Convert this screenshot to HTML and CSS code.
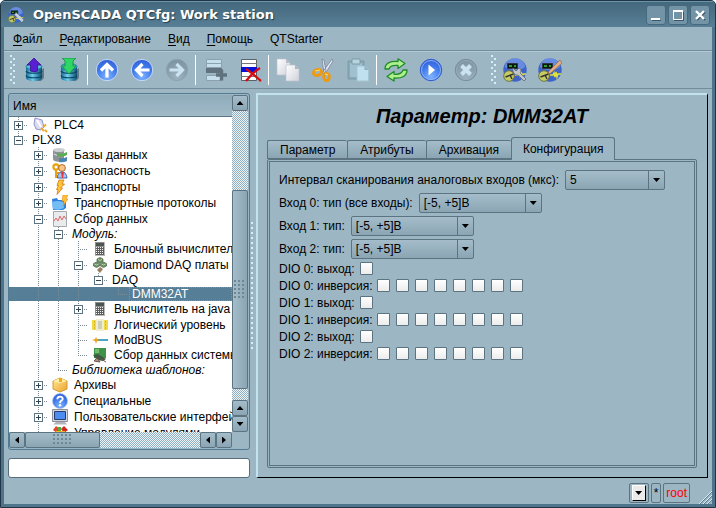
FILE: index.html
```html
<!DOCTYPE html>
<html lang="ru">
<head>
<meta charset="utf-8">
<title>OpenSCADA QTCfg: Work station</title>
<link rel="stylesheet" href="styles.css">
</head>
<body>
<svg class="defs" aria-hidden="true">
  <defs>
    <radialGradient id="gBlue" cx=".5" cy=".8" r=".8"><stop offset="0" stop-color="#7fb4ff"/><stop offset=".6" stop-color="#3f78ea"/><stop offset="1" stop-color="#3560d8"/></radialGradient>
    <radialGradient id="gGray" cx=".5" cy=".8" r=".8"><stop offset="0" stop-color="#9db3bf"/><stop offset="1" stop-color="#7b929f"/></radialGradient>
    <linearGradient id="gDb"><stop offset="0" stop-color="#176a92"/><stop offset=".4" stop-color="#6fd0ee"/><stop offset="1" stop-color="#0e4d70"/></linearGradient>
    <linearGradient id="gPage" x2="1" y2="1"><stop offset="0" stop-color="#fff"/><stop offset="1" stop-color="#cfd2dc"/></linearGradient>
    <linearGradient id="gGold" x2="1" y2="1"><stop offset="0" stop-color="#ffe89a"/><stop offset="1" stop-color="#eda32a"/></linearGradient>
    <symbol id="db" viewBox="0 0 24 24">
      <path d="M8 20l14-10v10l-3 3H8z" fill="#1d3440" opacity=".45"/>
      <path d="M4 8v12c0 4 16 4 16 0V8z" fill="url(#gDb)"/>
      <path d="M4 13c1 3 15 3 16 0M4 17.500c1 3 15 3 16 0" fill="none" stroke="#0b4867" stroke-width="1.200"/>
      <ellipse cx="12" cy="8.500" rx="8" ry="3" fill="#58bfe0" stroke="#1d7ca4"/>
    </symbol>
    <symbol id="scada" viewBox="0 0 24 24">
      <circle cx="12" cy="12" r="11.700" fill="#3d64c8"/><path d="M2 9a10 9 0 0 1 20 0c-4 4-15 4-20 0z" fill="#86a6ef" opacity=".6"/>
      <path d="M4.500 5.500h10v5h-10z" fill="#0b1a10" stroke="#2e3440"/><path d="M6 7h3v2H6zM11 7h2v2h-2z" fill="#2e9a35"/>
      <path d="M12 17h3l1-2 1 4 1-5 1 5 1-3h3" fill="none" stroke="#dfe13c" stroke-width="1.500"/>
      <circle cx="6" cy="18" r="5.300" fill="#c7cc62" stroke="#6e7740"/><path d="M2.500 19l8-3M7 17l2 4" stroke="#333" stroke-width="1.400"/>
    </symbol>
    <symbol id="calc" viewBox="0 0 16 16">
      <path d="M3 1h10v14H3z" fill="#8d8d8d"/><path d="M4 2h8v3H4z" fill="#4c5650"/>
      <path d="M4 6h8v8H4z" fill="#5e5e5e"/>
      <path d="M4 6.500h8M4 8.500h8M4 10.500h8M4 12.500h8" stroke="#f4f4f4" stroke-dasharray="1 1"/>
      <path d="M12.500 1v13.500H3" stroke="#bbb" fill="none"/>
    </symbol>
    <symbol id="bolt" viewBox="0 0 16 16"><path d="M7 1h5l-2 4h2.500l-4 4h2L5 15.500l1-5H4.500l2-4H5z" fill="#ffc933" stroke="#d9701c" stroke-width=".8"/></symbol>
  </defs>
</svg>
<div class="window">
  <header class="titlebar">
    <svg class="app-icon" viewBox="0 0 24 24"><use href="#scada"/><path d="M11 10l11 11" stroke="#ccd0d4" stroke-width="4"/></svg>
    <h1>OpenSCADA QTCfg: Work station</h1>
    <div class="winbtns">
      <button aria-label="Свернуть"><svg viewBox="0 0 18 18"><path d="M5 14.500h9" stroke="#3a5668"/><path d="M4 13h9" stroke="#fff" stroke-width="2"/></svg></button>
      <button aria-label="Развернуть"><svg viewBox="0 0 18 18"><path d="M5 14.500h9.500V6" stroke="#3a5668" fill="none"/><path d="M4.500 4.500h9v9h-9z" stroke="#fff" fill="none"/><path d="M4 5h10" stroke="#fff" stroke-width="2"/></svg></button>
      <button aria-label="Закрыть"><svg viewBox="0 0 18 18"><path d="M6 6l8 8M14 6l-8 8" stroke="#3a5668" stroke-width="2"/><path d="M5 5l8 8M13 5l-8 8" stroke="#fff" stroke-width="2.400"/></svg></button>
    </div>
  </header>

  <div class="client">
    <nav class="menubar">
      <a href="#"><u>Ф</u>айл</a><a href="#"><u>Р</u>едактирование</a><a href="#"><u>В</u>ид</a><a href="#"><u>П</u>омощь</a><a href="#">QTStarter</a>
    </nav>

    <div class="toolbar">
      <span class="handle"></span>
      <button aria-label="Загрузить из БД"><svg viewBox="0 0 24 24"><use href="#db"/><path d="M12 0l7 7h-3.500v6q-3.500 2-7 0V7H5z" fill="#5a1fd0" stroke="#37108c" stroke-width=".8"/></svg></button>
      <button aria-label="Сохранить в БД"><svg viewBox="0 0 24 24"><use href="#db"/><path d="M5 0h14l-3 3v5h3l-7 8-7-8h3V3z" fill="#2fd565" stroke="#138a38" stroke-width=".8"/></svg></button>
      <span class="sep"></span>
      <button aria-label="Вверх"><svg viewBox="0 0 24 24"><circle cx="12" cy="12" r="10.700" fill="url(#gBlue)" stroke="#c6dcf6" stroke-width="1"/><path d="M12 19.500V7M6 12.500L12 6.500l6 6" fill="none" stroke="#fff" stroke-width="3.200"/></svg></button>
      <button aria-label="Назад"><svg viewBox="0 0 24 24"><circle cx="12" cy="12" r="10.700" fill="url(#gBlue)" stroke="#c6dcf6" stroke-width="1"/><path d="M19.500 12H7M12.500 6L6.500 12l6 6" fill="none" stroke="#fff" stroke-width="3.200"/></svg></button>
      <button aria-label="Вперёд" disabled><svg viewBox="0 0 24 24"><circle cx="12" cy="12" r="10.700" fill="url(#gGray)" stroke="#8ea4b0"/><path d="M4.500 12H17M11.500 6l6 6-6 6" fill="none" stroke="#c9e4f0" stroke-width="3.200"/></svg></button>
      <span class="sep"></span>
      <button aria-label="Добавить" disabled><svg viewBox="0 0 24 24"><path d="M3.500 1.500h15v4h-15zM3.500 5.500h15v4h-15zM3.500 17.500h15v5h-15z" fill="#c5e0ec" stroke="#8ba1ad"/><path d="M3 10h16v5H3z" fill="#60727d"/><path d="M13 17h11M18.500 11.500v11" stroke="#60727d" stroke-width="3.400"/></svg></button>
      <button aria-label="Удалить"><svg viewBox="0 0 24 24"><path d="M3.500 1.500h15v21h-15z" fill="#fff" stroke="#59636a"/><path d="M3 5.500h16M3 18.500h16" stroke="#777"/><path d="M3 9h16v5H3z" fill="#0510d8"/><path d="M8 11c5 3 9 7 15 12M22 10C17 13 12 18 8 23" stroke="#d60b10" stroke-width="2.300" fill="none"/></svg></button>
      <span class="sep"></span>
      <button aria-label="Копировать"><svg viewBox="0 0 24 24"><path d="M1 1h9l4 4v12H1z" fill="url(#gPage)" stroke="#c0c3cd" stroke-width=".7"/><path d="M10 1v4h4" fill="#b8bac4"/><path d="M10 7h9l4 4v12H10z" fill="url(#gPage)" stroke="#c0c3cd" stroke-width=".7"/><path d="M19 7v4h4" fill="#b2b4c0"/></svg></button>
      <button aria-label="Вырезать"><svg viewBox="0 0 24 24"><path d="M11 1l2 1 2 11-2 2zM21 1l1 2-8 13-3-1z" fill="#e4e8f0" stroke="#77829a" stroke-width=".8"/><g fill="none" stroke="#ef9a0c" stroke-width="3"><ellipse cx="6.500" cy="14.500" rx="4" ry="2.800" transform="rotate(-15 6.500 14.500)"/><ellipse cx="15.500" cy="19" rx="2.800" ry="3.500"/></g><path d="M4 13l5-1M14 16l3 1" stroke="#ffe27a"/></svg></button>
      <button aria-label="Вставить" disabled><svg viewBox="0 0 24 24"><path d="M2 3h16v18H2z" fill="#89a9b8" stroke="#7e9aa8"/><path d="M4 5h12v14H4z" fill="#9fc0ce"/><path d="M6 1h8v5H6z" fill="#b6d4e0" stroke="#7e9aa8"/><path d="M11 8h7.500l4 4v11H11z" fill="#bfe0ec" stroke="#a4c5d3"/><path d="M18.500 8v4h4" fill="#8cb2c2"/></svg></button>
      <span class="sep"></span>
      <button aria-label="Обновить"><svg viewBox="0 0 24 24"><g fill="#aef08e" stroke="#1f8c26" stroke-width="1.300" stroke-linejoin="round"><path d="M1 11c0-6 5-8 13-7.500V.8L21 5.500l-7 5V7.500c-5-.5-8 0-9 3.500z"/><path d="M23 12c0 6-5 8.500-13 8v3L3 18.500l7-5v2.700c5 .5 8-.7 9-4.200z"/></g></svg></button>
      <button aria-label="Запустить"><svg viewBox="0 0 24 24"><circle cx="12" cy="12" r="10.700" fill="url(#gBlue)" stroke="#2e5bd0"/><circle cx="12" cy="12" r="9.500" fill="none" stroke="#9cc0fa" stroke-width=".8"/><path d="M9.500 6.500l6.500 5.500-6.500 5.500z" fill="#fff"/></svg></button>
      <button aria-label="Остановить" disabled><svg viewBox="0 0 24 24"><circle cx="12" cy="12" r="10.700" fill="url(#gGray)" stroke="#788e9a"/><circle cx="12" cy="12" r="9.500" fill="none" stroke="#9ab0bc" stroke-width=".8"/><path d="M7.500 7.500l9 9M16.500 7.500l-9 9" stroke="#c9e4f0" stroke-width="4"/></svg></button>
      <span class="handle second"></span>
      <button aria-label="Конфигуратор"><svg viewBox="0 0 24 24"><use href="#scada"/><path d="M10 10l3 3 3-3c3 1 2 4 1 5l6 6-2 2-6-6c-3 1-6-3-5-7z" fill="#c0c4ca" stroke="#62676e" stroke-width=".8"/></svg></button>
      <button aria-label="Среда исполнения"><svg viewBox="0 0 24 24"><use href="#scada"/><path d="M11 13L22 2l2 3-11 10-3 1z" fill="#e2ae84" stroke="#8a6040" stroke-width=".6"/></svg></button>
    </div>

    <main class="work">
      <section class="left">
        <div class="treebox">
          <div class="viewport">
            <div class="head">Имя</div>
            <ul class="tree">
              <li><i class="v t"><button aria-label="Развернуть PLC4"></button></i><svg viewBox="0 0 16 16"><path d="M3 1l7 2 2 7-3 3-5-1-2-5z" fill="#d9dbf4" stroke="#9497c8"/><path d="M5 3l4 7" stroke="#fff" stroke-width="2"/><path d="M9 11l3 3M11 10l3-2.500M13 13l2 2" stroke="#f5a623" stroke-width="2"/></svg><span>PLC4</span></li>
              <li class="s"><i class="l t"><button aria-label="Свернуть PLX8"></button></i><span>PLX8</span></li>
              <li><i></i><i class="v t"><button aria-label="Развернуть"></button></i><svg viewBox="0 0 16 16"><path d="M1 3v9c0 3 9 4 11 1V3z" fill="#8d9497"/><ellipse cx="7" cy="3" rx="6" ry="2" fill="#c9cfd2"/><path d="M2 7c3 2 7 2 10 0" stroke="#eee" fill="none"/><path d="M5 6q5 2 10-1v3q-5 3-10 1z" fill="#5bad50"/><path d="M7 11q4 1 8-1v4q-4 2-8 1z" fill="#4a84b0"/></svg><span>Базы данных</span></li>
              <li><i></i><i class="v t"><button aria-label="Развернуть"></button></i><svg viewBox="0 0 16 16"><circle cx="4" cy="4" r="2.600" fill="none" stroke="#e8a20e" stroke-width="2.200"/><path d="M4 6v9M4 10h3M4 13h3" stroke="#e8a20e" stroke-width="2"/><circle cx="10" cy="5" r="3.400" fill="#f7c58c" stroke="#b26c2a"/><path d="M5.500 15q0-6 4.500-6t5 6z" fill="#a9c4f2" stroke="#3e68b8"/><path d="M9 9h3l-1 6h-1z" fill="#e33"/></svg><span>Безопасность</span></li>
              <li><i></i><i class="v t"><button aria-label="Развернуть"></button></i><svg><use href="#bolt"/></svg><span>Транспорты</span></li>
              <li><i></i><i class="v t"><button aria-label="Развернуть"></button></i><svg viewBox="0 0 16 16"><path d="M0 4l5-1 1 2h8v8l-3 2H1z" fill="#2f7fdd"/><path d="M0 7q6-2 11 0l1 6q-5 3-11 1z" fill="#72bdf6"/><path d="M11 0h5l-2 4h2l-5 7 1-5h-2z" fill="#ffc233" stroke="#e28a1c" stroke-width=".6"/></svg><span>Транспортные протоколы</span></li>
              <li><i></i><i class="v t"><button aria-label="Свернуть"></button></i><svg viewBox="0 0 16 16"><path d="M1.500.5h13v15h-13z" fill="#e9ebed" stroke="#a5a9ad"/><path d="M2 10l2-3 2 3 2-5 2 4 2-4 2 3" fill="none" stroke="#de6a6a"/></svg><span>Сбор данных</span></li>
              <li class="s"><i></i><i class="v"></i><i class="v t"><button aria-label="Свернуть"></button></i><span><em>Модуль:</em></span></li>
              <li><i></i><i class="v"></i><i class="v"></i><i class="v t"></i><svg><use href="#calc"/></svg><span>Блочный вычислитель</span></li>
              <li><i></i><i class="v"></i><i class="v"></i><i class="v t"><button aria-label="Свернуть"></button></i><svg viewBox="0 0 16 16"><g fill="#6f9064" stroke="#4b6646" stroke-width=".7"><path d="M8 .5l3 1.500v2.500L8 6 5 4.500V2zM4.500 5l3 1.500V9l-3 1.500L1.500 9V6.500zM11.500 5l3 1.500V9l-3 1.500L8.500 9V6.500z"/></g><path d="M8 10l3 2-3 4-3-3z" fill="#997e60"/><path d="M6 2.500l2 1 2-1M2.500 7l2 1 2-1M9.500 7l2 1 2-1" fill="none" stroke="#b9cfae"/></svg><span>Diamond DAQ платы сбора данных</span></li>
              <li class="s"><i></i><i class="v"></i><i class="v"></i><i class="v"></i><i class="l t"><button aria-label="Свернуть"></button></i><span>DAQ</span></li>
              <li class="s sel"><i></i><i class="v"></i><i class="v"></i><i class="v"></i><i></i><i class="l t"></i><span>DMM32AT</span></li>
              <li><i></i><i class="v"></i><i class="v"></i><i class="v t"><button aria-label="Развернуть"></button></i><svg><use href="#calc"/></svg><span>Вычислитель на java</span></li>
              <li><i></i><i class="v"></i><i class="v"></i><i class="v t"></i><svg viewBox="0 0 16 16"><path d="M0 3h16v10H0z" fill="#f1dc45"/><path d="M4 2h8v12H4z" fill="#f2ecd0"/><path d="M6 4h4v8H6z" fill="#cdd0b8"/><path d="M2.500 4v8M13.500 4v8" stroke="#d8ba20" stroke-dasharray="2 1"/></svg><span>Логический уровень</span></li>
              <li class="s"><i></i><i class="v"></i><i class="v"></i><i class="v t"></i><svg viewBox="0 0 16 16"><path d="M3 8h13" stroke="#4ba5c8" stroke-width="2"/><path d="M0 8l3-1 1-2 1 2 3 1-3 1-1 3-1-3z" fill="#f0a21a"/></svg><span>ModBUS</span></li>
              <li><i></i><i class="v"></i><i class="v"></i><i class="l t"></i><svg viewBox="0 0 16 16"><path d="M2 1h12v10H2z" fill="#3f9449"/><path d="M3 2h4v4H3z" fill="#74bd6b"/><path d="M1 8l5-1 8 5-3 2-6-1z" fill="#435b43"/><path d="M2 14l3-3 3 4zM9 12l5 3" stroke="#72564a" fill="#a99a86"/></svg><span>Сбор данных системы</span></li>
              <li class="s"><i></i><i class="v"></i><i class="l t"></i><span><em>Библиотека шаблонов:</em></span></li>
              <li><i></i><i class="v t"><button aria-label="Развернуть"></button></i><svg viewBox="0 0 16 16"><path d="M1 4l7-3 7 3v8l-7 3-7-3z" fill="url(#gGold)" stroke="#d09a30"/><path d="M1 4l7 2 7-2-7-3z" fill="#fff0a8"/><path d="M7 1v4h3V1" fill="#f0a81a"/></svg><span>Архивы</span></li>
              <li><i></i><i class="v t"><button aria-label="Развернуть"></button></i><svg viewBox="0 0 16 16"><circle cx="8" cy="8" r="7.500" fill="url(#gBlue)" stroke="#a6c2f2" stroke-width=".7"/><path d="M5.300 6.200C5.500 2.700 11 3 10.700 6c-.2 1.700-2.700 1.600-2.700 4" fill="none" stroke="#fff" stroke-width="1.900"/><circle cx="8" cy="12.300" r="1.200" fill="#fff"/></svg><span>Специальные</span></li>
              <li><i></i><i class="v t"><button aria-label="Развернуть"></button></i><svg viewBox="0 0 16 16"><path d="M.5.500h15v12H.5z" fill="#d5d8dc" stroke="#8b8e96"/><path d="M2.500 2.500h11v8h-11z" fill="#4d8cf0" stroke="#253d70"/><path d="M4 13h9l2 2.500H1z" fill="#b2b5bb"/></svg><span>Пользовательские интерфейсы</span></li>
              <li><i></i><i class="l t"></i><svg viewBox="0 0 16 16"><path d="M1 5l3-4 4 3-3 4z" fill="#e9442c"/><path d="M9 4l3-3 4 4-4 3z" fill="#d3261c"/><path d="M4 6h9v8H4z" fill="#f0b52a"/><path d="M6 2h3v4H6z" fill="#52ab3d"/></svg><span>Управление модулями</span></li>
            </ul>
          </div>
          <div class="vbar">
            <button class="up" aria-label="Вверх"></button><span class="track g80"></span><span class="thumb"></span><span class="track g11"></span><button class="up" aria-label="Вверх"></button><button class="down" aria-label="Вниз"></button>
          </div>
          <div class="hbar">
            <button class="lt" aria-label="Влево"></button><span class="thumb"></span><span class="track"></span><button class="lt" aria-label="Влево"></button><button class="rt" aria-label="Вправо"></button>
          </div>
        </div>
        <input class="search" type="text" aria-label="Поиск">
      </section>
      <div class="splitter"></div>
      <section class="right">
        <h2>Параметр: DMM32AT</h2>
        <div class="tabs" role="tablist">
          <button role="tab">Параметр</button><button role="tab">Атрибуты</button><button role="tab">Архивация</button><button role="tab" class="on" aria-selected="true">Конфигурация</button>
        </div>
        <div class="page">
          <div class="fields">
            <div class="line"><label for="f0">Интервал сканирования аналоговых входов (мкс):</label><span class="combo short"><select id="f0"><option>5</option></select></span></div>
            <div class="line"><label for="f1">Вход 0: тип (все входы):</label><span class="combo"><select id="f1"><option>[-5, +5]В</option></select></span></div>
            <div class="line"><label for="f2">Вход 1: тип:</label><span class="combo"><select id="f2"><option>[-5, +5]В</option></select></span></div>
            <div class="line"><label for="f3">Вход 2: тип:</label><span class="combo"><select id="f3"><option>[-5, +5]В</option></select></span></div>
          </div>
          <div class="checks"><label for="o0">DIO 0: выход:</label><input type="checkbox" id="o0"></div>
          <div class="checks"><label for="i0">DIO 0: инверсия:</label><input type="checkbox" id="i0"><input type="checkbox" aria-label="1"><input type="checkbox" aria-label="2"><input type="checkbox" aria-label="3"><input type="checkbox" aria-label="4"><input type="checkbox" aria-label="5"><input type="checkbox" aria-label="6"><input type="checkbox" aria-label="7"></div>
          <div class="checks"><label for="o1">DIO 1: выход:</label><input type="checkbox" id="o1"></div>
          <div class="checks"><label for="i1">DIO 1: инверсия:</label><input type="checkbox" id="i1"><input type="checkbox" aria-label="1"><input type="checkbox" aria-label="2"><input type="checkbox" aria-label="3"><input type="checkbox" aria-label="4"><input type="checkbox" aria-label="5"><input type="checkbox" aria-label="6"><input type="checkbox" aria-label="7"></div>
          <div class="checks"><label for="o2">DIO 2: выход:</label><input type="checkbox" id="o2"></div>
          <div class="checks"><label for="i2">DIO 2: инверсия:</label><input type="checkbox" id="i2"><input type="checkbox" aria-label="1"><input type="checkbox" aria-label="2"><input type="checkbox" aria-label="3"><input type="checkbox" aria-label="4"><input type="checkbox" aria-label="5"><input type="checkbox" aria-label="6"><input type="checkbox" aria-label="7"></div>
        </div>
      </section>
    </main>

    <footer class="status">
      <span class="cell"><button class="drop" aria-label="Список"></button></span>
      <span class="cell">*</span>
      <span class="cell user">root</span>
      <svg class="grip" viewBox="0 0 14 14"><path d="M1 14L14 1M5 14l9-9M9 14l5-5" stroke="#d8eef8"/><path d="M2 14L14 2M6 14l8-8M10 14l4-4" stroke="#5f7f90"/></svg>
    </footer>
  </div>
</div>
</body>
</html>
```
FILE: styles.css
```css
:root {
  --base: #9cb6c4;
  --edge: #5c7482;
  --btn: linear-gradient(#a5bdca, #8ba5b4);
}

* { box-sizing: border-box; }

body {
  margin: 0;
  background: #fff;
  font: 12px/14px "Liberation Sans", Arial, sans-serif;
  color: #000;
}

button, input, select { font: inherit; color: inherit; margin: 0; padding: 0; border: 0; background: none; }
svg { display: block; flex: none; }
.defs { position: absolute; width: 0; height: 0; }

.window {
  display: flex;
  flex-direction: column;
  min-height: 100vh;
  border: 1px solid #203545;
  border-radius: 5px 5px 0 0;
  background: #4d7489;
  overflow: hidden;
}

/* Title bar */
.titlebar {
  display: flex;
  align-items: center;
  height: 26px;
  padding: 0 5px 0 7px;
  border-top: 1px solid #6d93a8;
  background: linear-gradient(#44687d, #587f96);
}
.app-icon { width: 16px; height: 16px; margin-right: 9px; }
.titlebar h1 {
  flex: 1;
  margin: 0;
  font: bold 13px/16px "DejaVu Sans", sans-serif;
  color: #fff;
  text-shadow: 1px 1px 1px #263f4e;
}
.winbtns { display: flex; gap: 2px; }
.winbtns button {
  width: 20px;
  height: 20px;
  border: 1px solid #47697d;
  border-radius: 3px;
  background: #7394a6;
}
.winbtns svg { width: 18px; height: 18px; }

.client {
  flex: 1;
  display: flex;
  flex-direction: column;
  margin: 0 3px 3px;
  background: var(--base);
}

/* Menu and toolbar */
.menubar {
  display: flex;
  gap: 17px;
  height: 24px;
  padding: 5px 9px;
  border-bottom: 1px solid #748d9b;
}
.menubar a { color: inherit; text-decoration: none; }
.menubar u { text-underline-offset: 2px; }

.toolbar {
  display: flex;
  align-items: center;
  height: 38px;
  padding-left: 6px;
  border-top: 1px solid #b4cad6;
  border-bottom: 1px solid #748d9b;
}
.toolbar button { display: flex; justify-content: center; width: 35px; }
.toolbar svg { width: 24px; height: 24px; }
.handle {
  width: 6px;
  height: 30px;
  background:
    radial-gradient(circle at 1px 1px, #d6eefa 1px, transparent 1px) 0 0 / 6px 6px,
    radial-gradient(circle at 4px 4px, #d6eefa 1px, transparent 1px) 0 0 / 6px 6px;
}
.second { margin-left: 8px; }
.sep { width: 3px; height: 30px; border: solid; border-width: 0 1px; border-color: #8aa4b2 var(--base); background: #fff; }

/* Work area */
.work { flex: 1; display: flex; padding: 4px 4px 3px; }
.left { display: flex; flex-direction: column; flex: none; gap: 8px; width: 242px; }
.treebox {
  flex: 1;
  display: grid;
  grid-template: minmax(0, 1fr) 16px / minmax(0, 1fr) 16px;
  padding: 1px 1px 1px 0;
  border: 1px solid #527a90;
  border-radius: 3px;
}
.viewport { overflow: hidden; background: #fff; contain: size; }
.head {
  height: 22px;
  padding: 4px;
  border-bottom: 1px solid #5e7786;
  background: linear-gradient(#8fabba, #a1bac8);
}
.tree { margin: 0; padding: 0; list-style: none; }
.tree li { display: flex; align-items: center; height: 16px; white-space: nowrap; }
.tree li.s { height: 14px; }
.tree i {
  position: relative;
  flex: none;
  width: 20px;
  height: 100%;
}
.tree .v::before, .tree .l::before {
  content: "";
  position: absolute;
  left: 9px;
  top: 0;
  width: 1px;
  height: 100%;
  background: repeating-linear-gradient(#7d8b94 0 1px, transparent 1px 2px);
}
.tree .l::before { height: 50%; }
.tree .t::after {
  content: "";
  position: absolute;
  left: 9px;
  right: 1px;
  top: 50%;
  height: 1px;
  background: repeating-linear-gradient(90deg, #7d8b94 0 1px, transparent 1px 2px);
}
.tree button {
  position: absolute;
  z-index: 1;
  left: 5px;
  top: calc(50% - 4px);
  width: 9px;
  height: 9px;
  border: 1px solid #5d7482;
  background:
    linear-gradient(#34434c, #34434c) center / 5px 1px no-repeat,
    #fff;
}
.tree button[aria-label^="Р"] {
  background:
    linear-gradient(#34434c, #34434c) center / 5px 1px no-repeat,
    linear-gradient(#34434c, #34434c) center / 1px 5px no-repeat,
    #fff;
}
.tree svg { width: 16px; height: 16px; margin: 0 3px; }
.tree span { padding-left: 3px; }
.tree .sel { background: #567e96; color: #fff; }
.sel span { flex: 1; line-height: 12px; border: 1px dotted #a98672; padding-left: 2px; }

.vbar { display: flex; flex-direction: column; background: var(--base); }
.hbar { display: flex; }
.vbar button, .hbar button {
  display: grid;
  place-items: center;
  flex: none;
  width: 16px;
  height: 16px;
  border: 1px solid var(--edge);
  border-radius: 2px;
  background: var(--btn);
}
.vbar button::after, .hbar button::after, .combo::after, .drop::after {
  content: "";
  width: 7px;
  height: 4px;
  background: #000;
  clip-path: polygon(0 0, 100% 0, 50% 100%);
}
.vbar .up::after { clip-path: polygon(0 100%, 100% 100%, 50% 0); }
.hbar .lt::after { width: 4px; height: 7px; clip-path: polygon(100% 0, 100% 100%, 0 50%); }
.hbar .rt::after { width: 4px; height: 7px; clip-path: polygon(0 0, 0 100%, 100% 50%); }
.track { background: repeating-conic-gradient(#8fb0c1 0 25%, #edf3f6 0 50%) 0 0 / 2px 2px; }
.thumb {
  display: grid;
  place-items: center;
  border: 1px solid var(--edge);
  border-radius: 2px;
  background: linear-gradient(90deg, #a5bdca, #8ba5b4);
}
.thumb::after {
  content: "";
  width: 12px;
  height: 20px;
  background: radial-gradient(circle at 1px 1px, #6d8794 1px, transparent 1px) 0 0 / 4px 4px;
}
.vbar .thumb { flex: 199; }
.g80 { flex: 80; }
.g11 { flex: 11; }
.hbar .thumb { flex: 74; background: var(--btn); }
.hbar .thumb::after { width: 20px; height: 12px; }
.hbar .track { flex: 101; }

.search {
  width: 100%;
  height: 20px;
  padding: 0 4px;
  border: 1px solid #566d7b;
  border-radius: 3px;
  background: #fff;
}

.splitter { display: grid; place-items: center; flex: none; width: 6px; }
.splitter::after {
  content: "";
  width: 4px;
  height: 128px;
  background: radial-gradient(circle at 1px 1px, #d6eefa 1px, transparent 1px) 0 0 / 5px 5px;
}

.right {
  flex: 1;
  display: flex;
  flex-direction: column;
  min-width: 0;
  padding: 9px 10px 9px 9px;
  border: 2px solid #c3e2f0;
  border-width: 2px 1px 1px 2px;
  border-right-color: #000;
  border-bottom-color: #000;
}
.right h2 { margin: 0; font: italic bold 20px/24px "Liberation Sans", Arial, sans-serif; text-align: center; }

.tabs { display: flex; align-items: flex-end; height: 22px; margin-top: 9px; }
.tabs button {
  height: 19px;
  padding: 0 12px;
  border: 1px solid var(--edge);
  border-right-width: 0;
  border-radius: 2px 2px 0 0;
  background: var(--btn);
}
.tabs .on {
  position: relative;
  height: 23px;
  padding: 0 11px;
  margin-bottom: -1px;
  border-width: 1px 1px 0;
  border-radius: 3px 3px 0 0;
  background: var(--base);
}
.page {
  flex: 1;
  display: flex;
  flex-direction: column;
  padding: 8px 9px 0;
  border: 3px double var(--edge);
  border-radius: 2px;
}
.fields { display: grid; gap: 3px; margin-bottom: 1px; }
.line, .checks { display: flex; align-items: center; gap: 6px; }
.line { height: 20px; }
.checks { height: 17px; }
.combo { position: relative; display: flex; width: 123px; }
.short { width: 100px; }
.combo::after { position: absolute; right: 5px; top: 8px; pointer-events: none; }
.combo::before { content: ""; position: absolute; right: 16px; top: 1px; bottom: 1px; width: 1px; background: var(--edge); }
.combo select {
  appearance: none;
  width: 100%;
  height: 20px;
  padding-left: 4px;
  border: 1px solid var(--edge);
  border-radius: 2px;
  background: var(--btn);
}
.checks input {
  appearance: none;
  flex: none;
  width: 13px;
  height: 13px;
  border: 1px solid var(--edge);
  border-radius: 1px;
  background: linear-gradient(#fff, #ececec);
}
.checks label { margin-right: -1px; }

/* Status bar */
.status {
  position: relative;
  display: flex;
  justify-content: flex-end;
  gap: 2px;
  padding: 2px 22px 1px 0;
}
.cell {
  display: grid;
  place-items: center;
  height: 20px;
  padding: 0 2px;
  border: 1px solid var(--edge);
  border-radius: 2px;
}
.user { color: #f00; }
.drop {
  display: grid;
  place-items: center;
  width: 14px;
  height: 16px;
  border: 1px outset #eee;
  border-color: #fff #222 #222 #fff;
  background: #ebebeb;
}
.grip { position: absolute; right: 0; bottom: 0; width: 14px; height: 14px; }
```
